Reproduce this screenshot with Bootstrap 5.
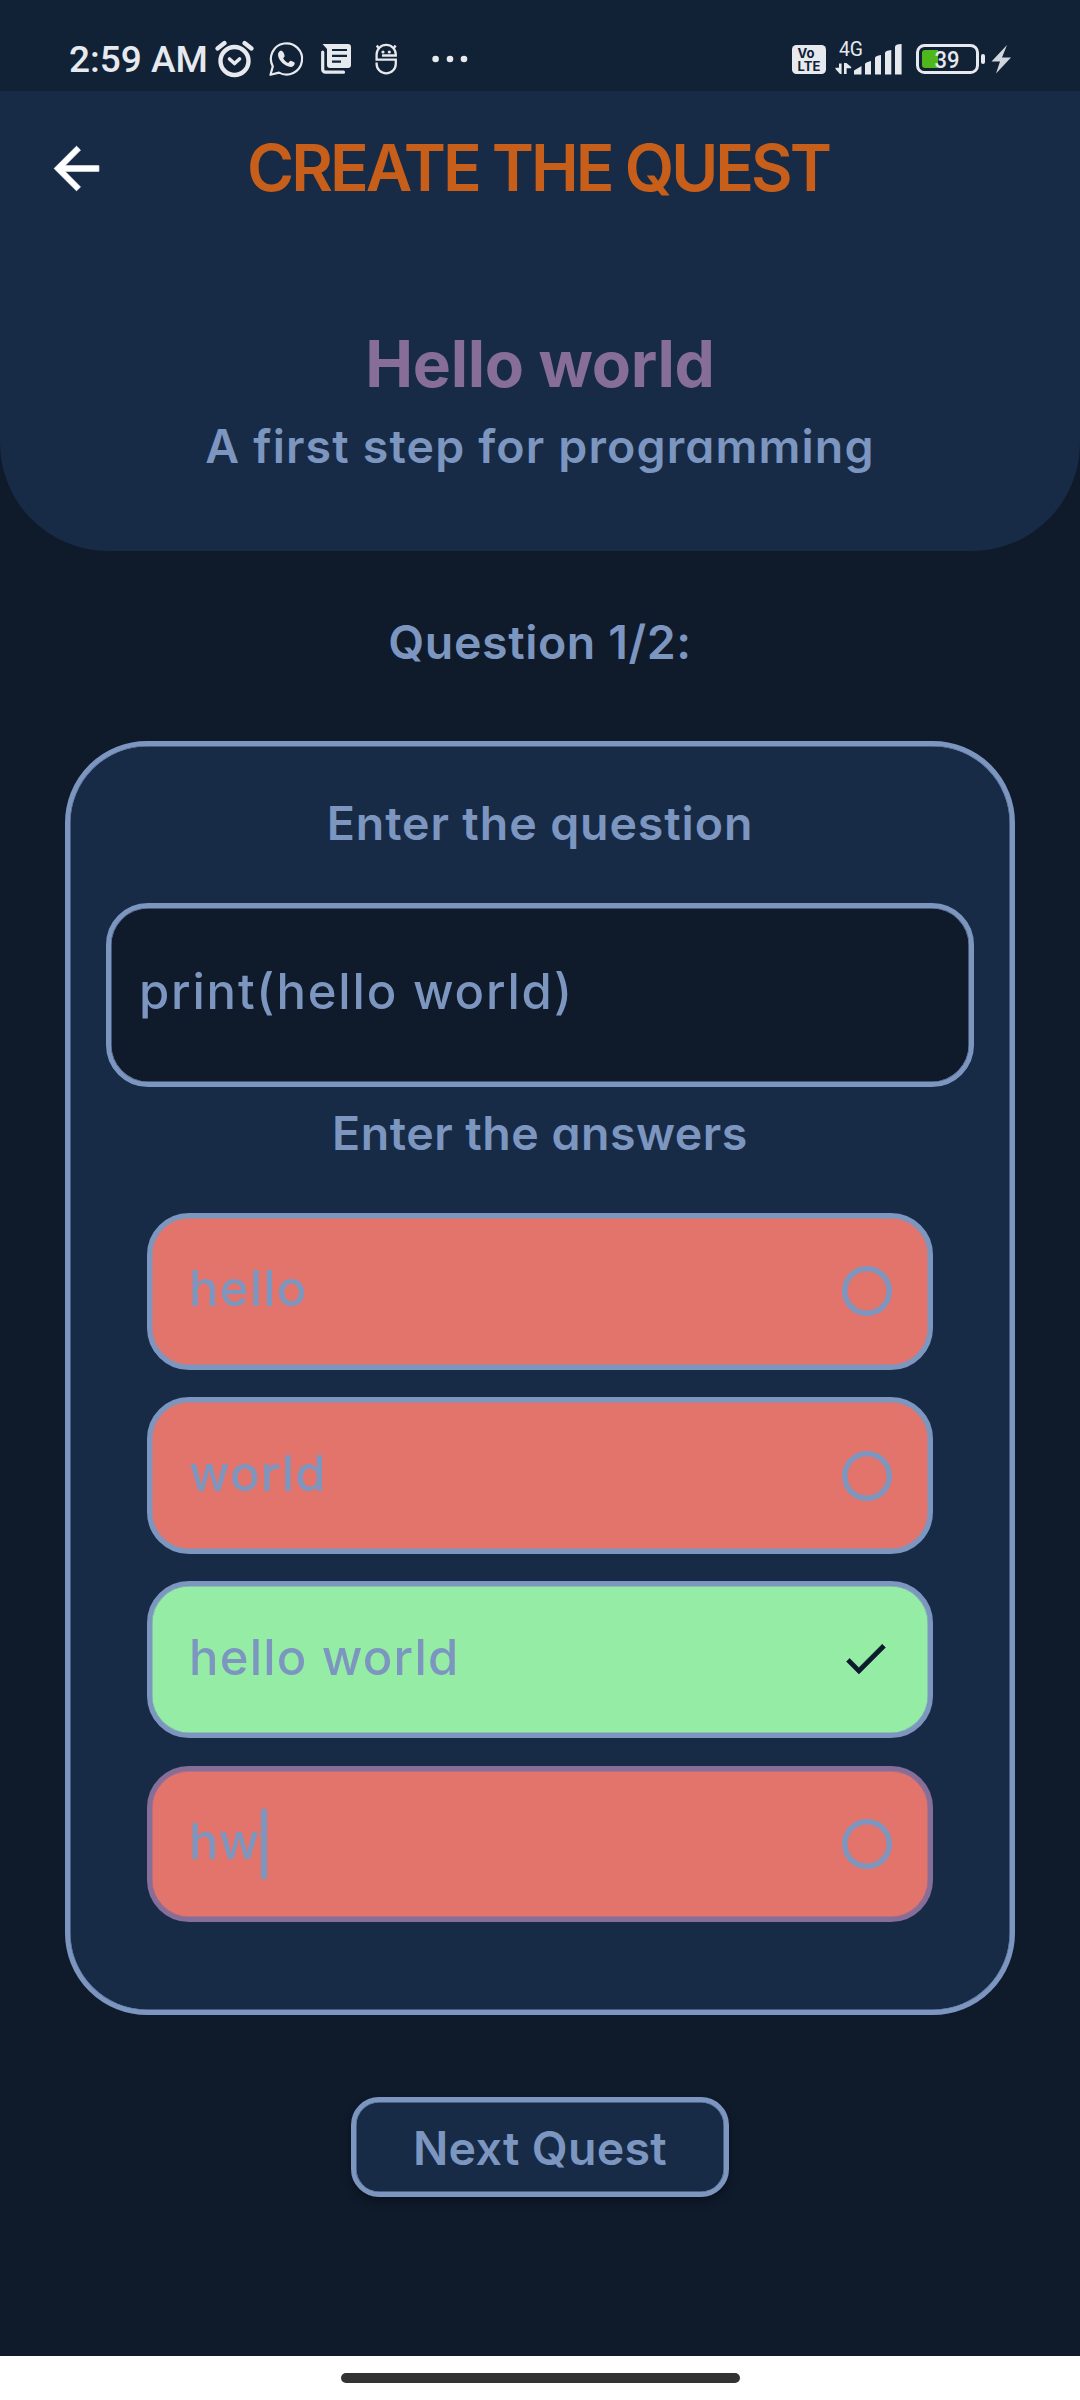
<!DOCTYPE html>
<html lang="en">
<head>
<meta charset="utf-8">
<meta name="viewport" content="width=device-width, initial-scale=1">
<title>Create the quest</title>
<link href="https://cdn.jsdelivr.net/npm/bootstrap@5.3.0/dist/css/bootstrap.min.css" rel="stylesheet">
<style>
:root{--night:#0f1a2b;--navy:#172b47;--sky:#7c96c0;--plum:#866e99;--coral:#e2746c;--mint:#95eda5}
body{width:1080px;height:2400px;background:var(--night);color:var(--sky);font-family:Inter,"Open Sans",sans-serif;font-feature-settings:"cv11";overflow:hidden}
svg{display:block;flex:none}
.statusbar{height:91px;background:#112136;color:#e6e9ed;padding:0 69px;font-family:Roboto,sans-serif}
.clock{width:141px;font-size:37px;font-weight:500;line-height:60px;padding-top:30px}
.hero{height:460px;background:var(--navy);border-radius:0 0 108px 108px}
.appbar{height:154px}
.back{width:67px;height:67px;margin-left:43px}
.app-title{font-size:64px;font-weight:600;line-height:90px;color:#c75e1a;letter-spacing:-3px;padding-right:4px}
.quest-name{font-size:64px;font-weight:650;line-height:90px;margin:74px 0 0;color:var(--plum);letter-spacing:-.3px}
.label-text{font-size:46.5px;font-weight:600;line-height:70px;margin:0}
.tagline{margin-top:2px;letter-spacing:1.15px}
.counter{margin-top:56px;letter-spacing:.6px}
.ask{letter-spacing:.9px}
.reply{margin-top:11px;letter-spacing:.5px}
.framed{border:5px solid var(--edge,var(--sky));box-shadow:inset 0 0 0 .5px var(--edge,var(--sky))}
.quest-card{width:950px;height:1274px;margin:64px auto 0;border-radius:82px;background:var(--navy);padding-top:42px}
.question-box{width:868px;height:184px;margin-top:45px;border-radius:42px;background:var(--night);padding:0 28px 6px;letter-spacing:1.8px}
.entry{font-size:49px;font-weight:500;line-height:70px}
.answers{width:786px;margin-top:45px;gap:27.5px}
.answer{height:156.7px;border-radius:42px;background:var(--coral);padding:0 36px 4px 37px;letter-spacing:1.2px}
.answer.correct{background:var(--mint)}
.answer.focused{--edge:var(--plum);letter-spacing:.3px}
.ring{width:50px;height:50px;border:5px solid var(--sky);box-shadow:inset 0 0 0 .5px var(--sky);border-radius:50%;margin-top:4px}
.tick{width:53px;height:53px;margin-top:2px}
.caret{width:6px;height:70px;background:var(--sky);margin-left:1px;margin-top:4px}
.next{width:378px;height:100px;margin-top:82px;border-radius:28px;background:var(--navy);color:var(--sky);box-shadow:inset 0 0 0 .5px var(--sky),0 4px 8px rgba(0,0,0,.35);letter-spacing:.3px}
.next span{display:block;padding-top:2px}
.gesture{height:44px;background:#fff;padding-top:17px}
.pill{width:399px;height:10px;border-radius:5px;background:#333}
</style>
</head>
<body class="d-flex flex-column">
<header class="statusbar d-flex align-items-stretch justify-content-between">
  <div class="d-flex">
    <span class="clock text-nowrap">2:59 AM</span>
    <svg width="270" height="91" viewBox="210 0 270 91" fill="none" stroke="#e6e9ed" stroke-linecap="round">
      <circle cx="234.500" cy="61" r="14" stroke-width="4.400"/>
      <path d="M217.500 48.500l7-5.500M251.500 48.500l-7-5.500" stroke-width="4.400"/>
      <path d="M229.500 59l5 4.500 5-4.500" stroke-width="3.600" stroke-linejoin="round"/>
      <path d="M270.500 74.800l2.300-8.400a15.600 15.600 0 1 1 6.200 6.200z" stroke-width="2.200" stroke-linejoin="round"/>
      <path d="M281.300 50.600c-2 .3-3.300 2-3.300 4.200 0 5.700 7.800 12.400 13.200 12.100 2.100-.2 3.800-1.900 3.500-4.100-1.200-1.100-2.900-1.700-4.400-2.100l-2.100 2.400c-2.200-1-4-2.700-5-4.800l1.500-2c-.4-2.100-1.300-4.900-3.400-5.700z" fill="#e6e9ed" stroke="none"/>
      <path d="M322.700 52v17.500a2.700 2.700 0 0 0 2.700 2.700H343.500" stroke-width="3.200"/>
      <path d="M322.500 44H348a3 3 0 0 1 3 3v18a3 3 0 0 1-3 3h-18a3 3 0 0 1-3-3V49z" fill="#e6e9ed" stroke="none"/>
      <path d="M332 50h15M332 55.800h15M332 61.700h9" stroke="#112136" stroke-width="2.200" stroke-linecap="butt"/>
      <path d="M382 55.500H395.800V54.500a9.600 9.600 0 0 0-19.200 0V59.700h19.200v4a9.600 9.600 0 0 1-19.200 0V62.500M378.800 48.500l-2-3M393.600 48.500l2-3" stroke-width="2.300" stroke-linecap="butt"/>
      <g fill="#e6e9ed" stroke="none"><circle cx="383" cy="52" r="1.600"/><circle cx="389.300" cy="52" r="1.600"/><circle cx="435.600" cy="59" r="3.300"/><circle cx="450" cy="59" r="3.300"/><circle cx="464" cy="59" r="3.300"/></g>
    </svg>
  </div>
  <svg width="220" height="91" viewBox="791 0 220 91" fill="#e6e9ed" font-family="Roboto, sans-serif">
    <rect x="792" y="45" width="34" height="29" rx="4.500"/>
    <g fill="#112136" font-family="Inter, sans-serif" font-weight="700" font-size="13"><text x="797.500" y="58" textLength="17">Vo</text><text x="797.500" y="71" textLength="23">LTE</text></g>
    <text x="839" y="56" font-size="20" textLength="24" lengthAdjust="spacingAndGlyphs">4G</text>
    <path d="M839 63.500h2.600V74h-1.600l-4.500-5v-1.200h3.500zM844 74h2.600v-5.800h4.600V67l-4.800-4H844z"/>
    <path d="M854 70.500l7.500-4.500v8.500H854zM865 64q0-1.500 6-3v13.500h-6zM875 58q0-2 6-3v19.500h-6zM885 53q0-2.500 6.300-3v24.500H885zM895 47q0-3 6.600-3v30.500H895z"/>
    <rect x="917.500" y="45.500" width="60" height="27" rx="7" fill="none" stroke="#e6e9ed" stroke-width="3"/>
    <path d="M925 50h13v18h-13a3 3 0 0 1-3-3V53a3 3 0 0 1 3-3z" fill="#4fb71c"/>
    <text x="934.500" y="67.500" font-size="23" textLength="25" lengthAdjust="spacingAndGlyphs" font-weight="500">39</text>
    <rect x="981" y="54" width="4" height="10" rx="2"/>
    <path d="M1007 45l-15.500 16.500h8.500l-4 12 15-16h-9z" fill="#d2d6dc"/>
  </svg>
</header>

<section class="hero text-center">
  <div class="appbar d-flex align-items-center position-relative">
    <svg class="back" viewBox="0 0 24 24" fill="#fff"><path d="M20 11H7.830l5.590-5.590L12 4l-8 8 8 8 1.410-1.410L7.830 13H20v-2z" stroke="#fff" stroke-width=".3"/></svg>
    <h1 class="app-title position-absolute start-0 end-0 m-0">CREATE THE QUEST</h1>
  </div>
  <h2 class="quest-name">Hello world</h2>
  <p class="label-text tagline">A first step for programming</p>
</section>

<main class="flex-grow-1 d-flex flex-column align-items-center">
  <p class="label-text counter">Question 1/2:</p>
  <section class="quest-card framed d-flex flex-column align-items-center">
    <h3 class="label-text ask">Enter the question</h3>
    <div class="question-box framed d-flex align-items-center entry">print(hello world)</div>
    <h3 class="label-text reply">Enter the answers</h3>
    <div class="answers d-flex flex-column">
      <div class="answer framed d-flex align-items-center justify-content-between entry"><span>hello</span><i class="ring"></i></div>
      <div class="answer framed d-flex align-items-center justify-content-between entry"><span>world</span><i class="ring"></i></div>
      <div class="answer framed correct d-flex align-items-center justify-content-between entry"><span>hello world</span><svg class="tick" viewBox="0 0 24 24" fill="#0e1b2d" stroke="#0e1b2d" stroke-width=".3"><path d="M9 16.170L4.830 12l-1.420 1.410L9 19 21 7l-1.410-1.410z"/></svg></div>
      <div class="answer framed focused d-flex align-items-center justify-content-between entry"><span class="d-flex align-items-center">hw<i class="caret"></i></span><i class="ring"></i></div>
    </div>
  </section>
  <button class="next framed label-text p-0" type="button"><span>Next Quest</span></button>
</main>
<footer class="gesture d-flex justify-content-center"><div class="pill"></div></footer>
<script src="https://cdn.jsdelivr.net/npm/bootstrap@5.3.0/dist/js/bootstrap.bundle.min.js"></script>
</body>
</html>
